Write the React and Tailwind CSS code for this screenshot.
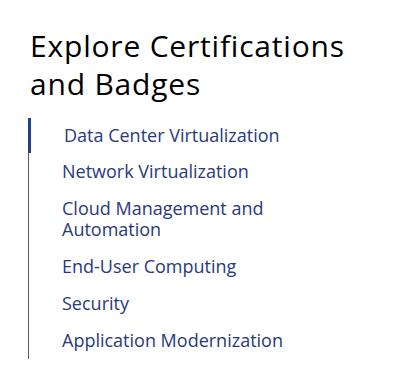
import React from "react";

const items = [
  "Data Center Virtualization",
  "Network Virtualization",
  "Cloud Management and Automation",
  "End-User Computing",
  "Security",
  "Application Modernization",
];

const App = () => {
  return (
    <div className="w-[393px] h-[386px] bg-white pl-[28px] pt-[27px] font-['Open_Sans',sans-serif]">
      <h2 className="pl-[2px] w-[340px] text-[30px] leading-[38px] tracking-[0.8px] text-black font-normal">
        Explore Certifications and Badges
      </h2>
      <ul className="mt-[15px] w-[260px] border-l border-[#565656]">
        {items.map((item, i) => (
          <li
            key={item}
            className={
              i === 0
                ? "-ml-px border-l-[3px] border-[#1d428a] pl-[33px] py-[7px] text-[18px] leading-[21px] text-[#283a7c]"
                : "pl-[33px] py-[8px] text-[18px] leading-[21px] text-[#283a7c]"
            }
          >
            {item}
          </li>
        ))}
      </ul>
    </div>
  );
};

export default App;
